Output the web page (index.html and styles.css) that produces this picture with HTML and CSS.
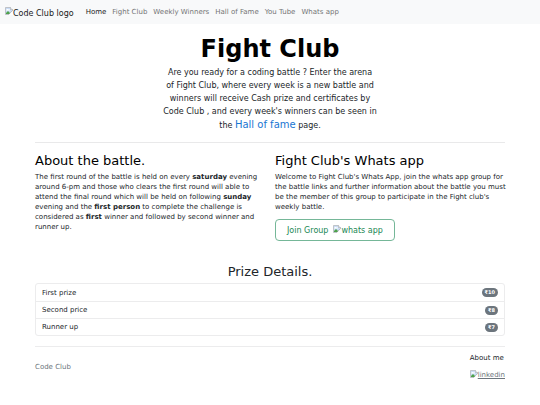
FILE: index.html
```html
<!DOCTYPE html>
<html lang="en">
<head>
    <meta charset="UTF-8">
    <meta name="viewport" content="width=device-width, initial-scale=1.0">
    <title>Fight Club</title>
    <link rel="stylesheet" href="styles.css">
</head>
<body>

    <svg class="sprite" aria-hidden="true">
        <symbol id="broken" viewBox="0 0 16 16">
            <path d="M1 1h10l4 4v10H1z" fill="#c9dcf5" stroke="#9a9a9a"/>
            <path d="M11 1v4h4" fill="#fff" stroke="#9a9a9a"/>
            <path d="M2 7c0-3 4-4 5-2 2-1 3 0 3 2z" fill="#fff"/>
            <path d="M2 14V12l4-4 6 6z" fill="#4ea24a"/>
            <path d="M16 7L7 16h9z" fill="#fff"/>
            <path d="M15 7l-8 8" stroke="#9a9a9a"/>
        </symbol>
    </svg>

    <nav class="navbar">
        <a class="brand" href="#"><svg class="broken"><use href="#broken"/></svg>Code Club logo</a>
        <div class="nav-links">
            <a class="nav-link active" href="#">Home</a>
            <a class="nav-link" href="#">Fight Club</a>
            <a class="nav-link" href="#">Weekly Winners</a>
            <a class="nav-link" href="#">Hall of Fame</a>
            <a class="nav-link" href="#">You Tube</a>
            <a class="nav-link" href="#">Whats app</a>
        </div>
    </nav>

    <div class="container">
        <header class="hero">
            <h1>Fight Club</h1>
            <p>Are you ready for a coding battle ? Enter the arena<br>
                of Fight Club, where every week is a new battle and<br>
                winners will receive Cash prize and certificates by<br>
                Code Club , and every week's winners can be seen in<br>
                the <a class="hall" href="#">Hall of fame</a> page.</p>
        </header>

        <main>
            <div class="row">
                <section>
                    <h2>About the battle.</h2>
                    <p>The first round of the battle is held on every <b>saturday</b> evening<br>
                        around 6-pm and those who clears the first round will able to<br>
                        attend the final round which will be held on following <b>sunday</b><br>
                        evening and the <b>first person</b> to complete the challenge is<br>
                        considered as <b>first</b> winner and followed by second winner and<br>
                        runner up.</p>
                </section>
                <section>
                    <h2>Fight Club's Whats app</h2>
                    <p>Welcome to Fight Club's Whats App, join the whats app group for<br>
                        the battle links and further information about the battle you must<br>
                        be the member of this group to participate in the Fight club's<br>
                        weekly battle.</p>
                    <button class="join" type="button">Join Group <span class="alt"><svg class="broken"><use href="#broken"/></svg>whats app</span></button>
                </section>
            </div>

            <h2 class="prize-title">Prize Details.</h2>
            <ul class="prizes">
                <li>First prize <span class="badge">₹10</span></li>
                <li>Second price <span class="badge">₹8</span></li>
                <li>Runner up <span class="badge">₹7</span></li>
            </ul>
        </main>

        <footer class="footer">
            <p class="copy">Code Club</p>
            <div class="about">
                <p>About me</p>
                <a class="linkedin" href="#"><svg class="broken"><use href="#broken"/></svg>linkedin</a>
            </div>
        </footer>
    </div>

</body>
</html>
```
FILE: styles.css
```css
* {
    box-sizing: border-box;
}
body {
    margin: 0;
    font-family: "DejaVu Sans", sans-serif;
    font-size: 7px;
    line-height: 10px;
    color: #212529;
    background: white;
}
h1, h2, p, ul {
    margin: 0;
    padding: 0;
}
a {
    text-decoration: none;
}
.sprite {
    display: none;
}
.broken {
    width: 8px;
    height: 8px;
    vertical-align: -1px;
}
.navbar {
    display: flex;
    align-items: center;
    gap: 12px;
    height: 24px;
    padding: 0 5px;
    background: #f8f9fa;
}
.brand {
    font-size: 8px;
    padding-top: 2px;
    color: #1a1a1a;
}
.brand .broken {
    vertical-align: 1px;
}
.nav-links {
    display: flex;
    gap: 6px;
}
.nav-link {
    color: #737475;
}
.nav-link.active {
    color: #1a1b1b;
}
.container {
    margin: 0 35px;
}
.hero {
    padding: 9px 0 10px;
    text-align: center;
    border-bottom: 1px solid #e9e9ea;
}
.hero h1 {
    font-size: 24px;
    line-height: 33px;
    color: black;
}
.hero p {
    font-size: 8px;
    line-height: 13px;
}
.hall {
    font-size: 10px;
    color: #1976d2;
}
.row {
    display: grid;
    grid-template-columns: minmax(0, 1fr) minmax(0, 1fr);
    gap: 10px;
    padding-top: 10px;
}
.row p {
    margin-top: 3px;
    white-space: nowrap;
}
h2 {
    font-size: 13px;
    font-weight: normal;
    line-height: 16px;
    color: black;
}
.join {
    display: flex;
    align-items: center;
    gap: 5px;
    margin-top: 7px;
    padding: 0 11px;
    height: 22px;
    font-family: inherit;
    font-size: 8px;
    color: #198754;
    background: white;
    border: 1px solid #75b798;
    border-radius: 4px;
    cursor: pointer;
}
.join .broken {
    vertical-align: 0;
}
.prize-title {
    margin: 23px 0 3px;
    text-align: center;
    color: #212529;
}
.prizes {
    list-style: none;
    border: 1px solid #ececed;
    border-radius: 3px;
}
.prizes li {
    display: flex;
    justify-content: space-between;
    align-items: center;
    height: 17px;
    padding: 0 6px;
}
.prizes li + li {
    border-top: 1px solid #ececed;
}
.badge {
    padding: 0 3px;
    font-size: 5px;
    line-height: 9px;
    font-weight: bold;
    color: white;
    background: #6c757d;
    border-radius: 5px;
}
.footer {
    display: flex;
    justify-content: space-between;
    align-items: center;
    margin-top: 10px;
    padding-top: 6px;
    border-top: 1px solid #ececed;
}
.copy {
    color: #6c757d;
}
.about a {
    display: block;
    margin-top: 7px;
    color: #6c757d;
    text-decoration: underline;
}
```
